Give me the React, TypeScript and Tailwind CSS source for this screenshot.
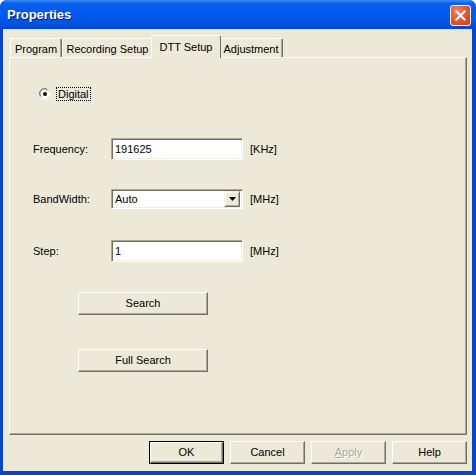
import type { JSX } from "react";

const FONT = "[font-family:'Liberation_Sans',Arial,sans-serif]";

function Tab({ label, width, selected }: { label: string; width: string; selected?: boolean }): JSX.Element {
  if (selected) {
    return (
      <div
        className={`relative z-10 -mx-[2px] -mb-[1px] flex h-[23px] items-start justify-center rounded-t-[3px] border-l border-t border-r border-l-white border-t-white border-r-[#716F64] bg-[#ECE9D8] pt-[3px] text-[11px] text-black ${width}`}
      >
        {label}
      </div>
    );
  }
  return (
    <div
      className={`flex h-[19px] items-start justify-center rounded-t-[2px] border-l border-t border-r border-l-white border-t-white border-r-[#716F64] pt-[2px] text-[11px] text-black shadow-[inset_-1px_0_0_#ACA899] ${width}`}
    >
      {label}
    </div>
  );
}

function Sunken({ className, children }: { className: string; children: React.ReactNode }): JSX.Element {
  return (
    <div
      className={`flex items-center border border-t-[#ACA899] border-l-[#ACA899] border-r-white border-b-white bg-white shadow-[inset_1px_1px_0_#716F64,inset_-1px_-1px_0_#F1EFE2] ${className}`}
    >
      {children}
    </div>
  );
}

function Button({
  label,
  className,
  isDefault,
  disabled,
}: {
  label: React.ReactNode;
  className: string;
  isDefault?: boolean;
  disabled?: boolean;
}): JSX.Element {
  const inner = (
    <div className="flex h-full w-full items-center justify-center border border-t-white border-l-white border-r-[#716F64] border-b-[#716F64] bg-[#ECE9D8] shadow-[inset_-1px_-1px_0_#ACA899]">
      <span className={disabled ? "text-[#ACA899] [text-shadow:1px_1px_0_#fff]" : "text-black"}>{label}</span>
    </div>
  );
  if (isDefault) {
    return <div className={`border border-black ${className}`}>{inner}</div>;
  }
  return <div className={className}>{inner}</div>;
}

function Radio(): JSX.Element {
  return (
    <svg width="12" height="12" viewBox="0 0 12 12">
      <path d="M1 8 A5.5 5.5 0 0 1 8 1" fill="none" stroke="#ACA899" strokeWidth="1" />
      <path d="M2 8.5 A4.5 4.5 0 0 1 8.5 2" fill="none" stroke="#716F64" strokeWidth="1" />
      <circle cx="6" cy="6" r="4.2" fill="#fff" />
      <path d="M4 11 A5.5 5.5 0 0 0 11 4" fill="none" stroke="#fff" strokeWidth="1" />
      <path d="M3.8 10 A4.5 4.5 0 0 0 10 3.8" fill="none" stroke="#F1EFE2" strokeWidth="1" />
      <circle cx="6" cy="6" r="2" fill="#000" />
    </svg>
  );
}

function FieldRow({ label, unit, mt, children }: { label: string; unit: string; mt: string; children: React.ReactNode }): JSX.Element {
  return (
    <div className={`flex items-center pl-[23px] ${mt}`}>
      <span className="w-[78px] text-[11px] text-black">{label}</span>
      {children}
      <span className="ml-[7px] text-[11px] text-black">{unit}</span>
    </div>
  );
}

export default function App(): JSX.Element {
  return (
    <div className={`flex h-[475px] w-[476px] flex-col rounded-t-[7px] bg-[#0047D6] ${FONT}`}>
      {/* title bar */}
      <div className="flex h-[29px] items-center justify-between rounded-t-[7px] bg-[linear-gradient(180deg,#3C8CF8_0%,#0A5FEA_12%,#0058EE_50%,#0054E3_80%,#0047D0_100%)] pl-[7px] pr-[5px]">
        <span className="text-[13px] font-bold text-white [text-shadow:1px_1px_0_#0A1E6E]">Properties</span>
        <div className="mt-[1px] flex h-[21px] w-[21px] items-center justify-center rounded-[3px] border border-white bg-[radial-gradient(circle_at_35%_30%,#F08868_0%,#E35A33_45%,#C6401E_100%)]">
          <svg width="11" height="11" viewBox="0 0 11 11">
            <path d="M1.5 1.5 L9.5 9.5 M9.5 1.5 L1.5 9.5" stroke="#fff" strokeWidth="2" strokeLinecap="square" />
          </svg>
        </div>
      </div>

      {/* client area */}
      <div className="mb-[4px] ml-[3px] mr-[4px] flex flex-1 flex-col bg-[#ECE9D8] pl-[6px] pr-[5px] pt-[6px]">
        <div className="flex h-[22px] items-end pl-[1px]">
          <Tab label="Program" width="w-[52px]" />
          <Tab label="Recording Setup" width="w-[91px]" />
          <Tab label="DTT Setup" width="w-[70px]" selected />
          <Tab label="Adjustment" width="w-[64px]" />
        </div>

        <div className="flex h-[378px] flex-col border border-t-white border-l-white border-r-[#716F64] border-b-[#716F64] shadow-[inset_-1px_-1px_0_#ACA899]">
          <div className="mt-[29px] flex h-[14px] items-center pl-[29px]">
            <Radio />
            <span className="ml-[5px] border border-dotted border-black px-[1px] text-[11px] leading-[12px] text-black">Digital</span>
          </div>

          <FieldRow label="Frequency:" unit="[KHz]" mt="mt-[37px]">
            <Sunken className="h-[22px] w-[132px] pl-[3px] text-[11px] text-black">191625</Sunken>
          </FieldRow>

          <FieldRow label="BandWidth:" unit="[MHz]" mt="mt-[29px]">
            <Sunken className="h-[20px] w-[132px] justify-between pl-[3px] pr-[2px] text-[11px] text-black">
              <span>Auto</span>
              <div className="flex h-[16px] w-[16px] items-center justify-center border border-t-[#F1EFE2] border-l-[#F1EFE2] border-r-[#716F64] border-b-[#716F64] bg-[#ECE9D8] shadow-[inset_1px_1px_0_#fff,inset_-1px_-1px_0_#ACA899]">
                <svg width="7" height="4" viewBox="0 0 7 4">
                  <path d="M0 0 H7 L3.5 4 Z" fill="#000" />
                </svg>
              </div>
            </Sunken>
          </FieldRow>

          <FieldRow label="Step:" unit="[MHz]" mt="mt-[31px]">
            <Sunken className="h-[22px] w-[132px] pl-[3px] text-[11px] text-black">1</Sunken>
          </FieldRow>

          <div className="mt-[30px] pl-[68px]">
            <Button label="Search" className="h-[23px] w-[130px] text-[11px]" />
          </div>
          <div className="mt-[34px] pl-[68px]">
            <Button label="Full Search" className="h-[23px] w-[130px] text-[11px]" />
          </div>
        </div>

        <div className="mt-[6px] flex justify-end gap-[6px] text-[11px]">
          <Button label="OK" className="h-[23px] w-[75px]" isDefault />
          <Button label="Cancel" className="h-[23px] w-[75px]" />
          <Button
            label={
              <>
                <span className="underline">A</span>pply
              </>
            }
            className="h-[23px] w-[75px]"
            disabled
          />
          <Button label="Help" className="h-[23px] w-[75px]" />
        </div>
      </div>
    </div>
  );
}
